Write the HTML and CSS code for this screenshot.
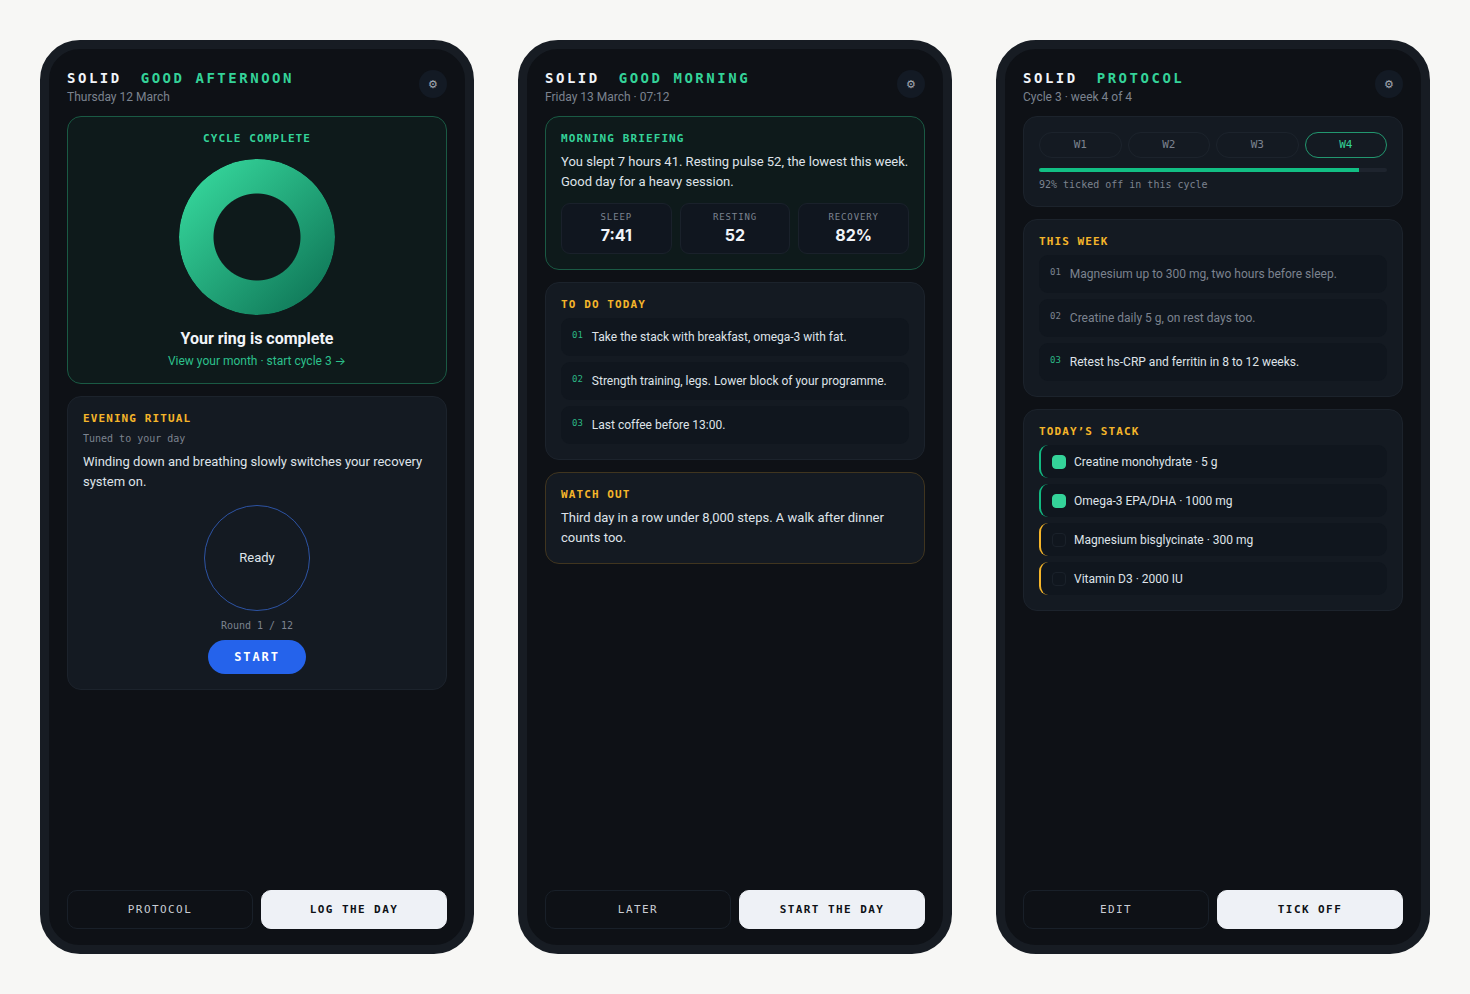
FILE: index.html
```html
<!DOCTYPE html>
<html lang="en">
<head>
<meta charset="utf-8">
<meta name="viewport" content="width=device-width, initial-scale=1">
<title>Solid</title>
<link rel="stylesheet" href="styles.css">
</head>
<body>
<main class="board">

  <section class="phone" aria-label="Good afternoon">
    <header class="top">
      <div class="top-text">
        <h1 class="brand">SOLID <span class="brand-page">GOOD AFTERNOON</span></h1>
        <p class="date">Thursday 12 March</p>
      </div>
      <button class="gear" type="button" aria-label="Settings">⚙</button>
    </header>
    <div class="cards">
      <article class="card card-green centered">
        <h2 class="label label-green">CYCLE COMPLETE</h2>
        <div class="ring"></div>
        <h3 class="ring-title">Your ring is complete</h3>
        <a class="ring-link" href="#month">View your month · start cycle 3 →</a>
      </article>
      <article class="card">
        <h2 class="label">EVENING RITUAL</h2>
        <p class="note">Tuned to your day</p>
        <p class="body">Winding down and breathing slowly switches your recovery system on.</p>
        <div class="breath">
          <div class="orb">Ready</div>
          <p class="note">Round 1 / 12</p>
          <button class="start" type="button">START</button>
        </div>
      </article>
    </div>
    <footer class="actions">
      <button class="btn" type="button">PROTOCOL</button>
      <button class="btn btn-main" type="button">LOG THE DAY</button>
    </footer>
  </section>

  <section class="phone" aria-label="Good morning">
    <header class="top">
      <div class="top-text">
        <h1 class="brand">SOLID <span class="brand-page">GOOD MORNING</span></h1>
        <p class="date">Friday 13 March · 07:12</p>
      </div>
      <button class="gear" type="button" aria-label="Settings">⚙</button>
    </header>
    <div class="cards">
      <article class="card card-green">
        <h2 class="label label-green">MORNING BRIEFING</h2>
        <p class="body">You slept 7 hours 41. Resting pulse 52, the lowest this week. Good day for a heavy session.</p>
        <dl class="stats">
          <div class="stat"><dt>SLEEP</dt><dd>7:41</dd></div>
          <div class="stat"><dt>RESTING</dt><dd>52</dd></div>
          <div class="stat"><dt>RECOVERY</dt><dd>82%</dd></div>
        </dl>
      </article>
      <article class="card">
        <h2 class="label">TO DO TODAY</h2>
        <ol class="steps">
          <li class="step"><span class="num">01</span><span>Take the stack with breakfast, omega-3 with fat.</span></li>
          <li class="step"><span class="num">02</span><span>Strength training, legs. Lower block of your programme.</span></li>
          <li class="step"><span class="num">03</span><span>Last coffee before 13:00.</span></li>
        </ol>
      </article>
      <article class="card card-amber">
        <h2 class="label">WATCH OUT</h2>
        <p class="body">Third day in a row under 8,000 steps. A walk after dinner counts too.</p>
      </article>
    </div>
    <footer class="actions">
      <button class="btn" type="button">LATER</button>
      <button class="btn btn-main" type="button">START THE DAY</button>
    </footer>
  </section>

  <section class="phone" aria-label="Protocol">
    <header class="top">
      <div class="top-text">
        <h1 class="brand">SOLID <span class="brand-page">PROTOCOL</span></h1>
        <p class="date">Cycle 3 · week 4 of 4</p>
      </div>
      <button class="gear" type="button" aria-label="Settings">⚙</button>
    </header>
    <div class="cards">
      <article class="card">
        <div class="weeks">
          <button class="week" type="button">W1</button>
          <button class="week" type="button">W2</button>
          <button class="week" type="button">W3</button>
          <button class="week week-on" type="button" aria-pressed="true">W4</button>
        </div>
        <div class="bar"><div class="bar-fill" style="width: 92%"></div></div>
        <p class="note">92% ticked off in this cycle</p>
      </article>
      <article class="card">
        <h2 class="label">THIS WEEK</h2>
        <ol class="steps">
          <li class="step step-past"><span class="num">01</span><span>Magnesium up to 300 mg, two hours before sleep.</span></li>
          <li class="step step-past"><span class="num">02</span><span>Creatine daily 5 g, on rest days too.</span></li>
          <li class="step"><span class="num">03</span><span>Retest hs-CRP and ferritin in 8 to 12 weeks.</span></li>
        </ol>
      </article>
      <article class="card">
        <h2 class="label">TODAY’S STACK</h2>
        <div class="stack">
          <label class="dose dose-done"><input class="tick" type="checkbox" checked>Creatine monohydrate · 5 g</label>
          <label class="dose dose-done"><input class="tick" type="checkbox" checked>Omega-3 EPA/DHA · 1000 mg</label>
          <label class="dose"><input class="tick" type="checkbox">Magnesium bisglycinate · 300 mg</label>
          <label class="dose"><input class="tick" type="checkbox">Vitamin D3 · 2000 IU</label>
        </div>
      </article>
    </div>
    <footer class="actions">
      <button class="btn" type="button">EDIT</button>
      <button class="btn btn-main" type="button">TICK OFF</button>
    </footer>
  </section>

</main>
</body>
</html>
```
FILE: styles.css
```css
:root {
  --page: #f7f7f5;
  --frame: #171c23;
  --screen: #0e1116;
  --card: #141a22;
  --well: #10161e;
  --line: #1c232c;
  --text: #dfe3e9;
  --bright: #f1f4f9;
  --muted: #7c838f;
  --green: #34d399;
  --amber: #f5b52a;
  --sans: Roboto, Inter, sans-serif;
  --mono: "DejaVu Sans Mono", "Liberation Mono", monospace;
}

* { box-sizing: border-box; }

body {
  margin: 0;
  background: var(--page);
  color: var(--text);
  font-family: var(--sans);
  font-size: 13px;
  line-height: 20px;
}

h1, h2, h3, p, dl, dd, ol { margin: 0; padding: 0; }
button { font-family: inherit; cursor: pointer; }

.board {
  display: grid;
  grid-template-columns: repeat(3, 1fr);
  gap: 44px;
  min-height: 100vh;
  padding: 40px;
}

.phone {
  display: flex;
  flex-direction: column;
  padding: 18px 18px 16px;
  border: 9px solid var(--frame);
  border-radius: 40px;
  background: var(--screen);
}

.top {
  display: flex;
  justify-content: space-between;
  align-items: flex-start;
  margin-bottom: 10px;
}

.brand {
  color: var(--bright);
  font: 700 14px/22px var(--mono);
  letter-spacing: 0.18em;
}
.brand-page { margin-left: 8px; color: var(--green); }

.date { color: var(--muted); font-size: 12px; line-height: 17px; }

.gear {
  width: 28px;
  height: 28px;
  margin-top: 3px;
  padding: 0;
  border: 0;
  border-radius: 50%;
  background: #131a24;
  color: #a3a9b3;
  font-size: 11px;
  line-height: 29px;
}

.cards { display: flex; flex-direction: column; gap: 12px; }

.card {
  padding: 15px;
  border: 1px solid var(--line);
  border-radius: 14px;
  background: var(--card);
}
.card-green { border-color: #1a5a44; background: #0e1a1b; }
.card-amber { border-color: #40351f; }

.centered {
  display: flex;
  flex-direction: column;
  align-items: center;
}

.label {
  margin-bottom: 7px;
  color: var(--amber);
  font: 700 11px/13px var(--mono);
  letter-spacing: 0.1em;
}
.label-green { color: var(--green); }

.note { color: var(--muted); font: 10px/13px var(--mono); }
.note + .body { margin-top: 7px; }

.ring {
  width: 156px;
  height: 156px;
  margin: 7px 0 14px;
  border-radius: 50%;
  background: linear-gradient(135deg, #34d399 12%, #0f7657 92%);
  -webkit-mask: radial-gradient(circle, transparent 43px, #000 44px);
  mask: radial-gradient(circle, transparent 43px, #000 44px);
}
.ring-title { color: var(--bright); font-size: 16px; line-height: 20px; }
.ring-link {
  margin-top: 5px;
  color: #2cc08c;
  font-size: 12px;
  line-height: 14px;
  text-decoration: none;
}

.breath {
  display: flex;
  flex-direction: column;
  align-items: center;
  margin-top: 13px;
}
.orb {
  display: grid;
  place-items: center;
  width: 106px;
  height: 106px;
  margin-bottom: 8px;
  border: 1px solid #2d53a3;
  border-radius: 50%;
}
.start {
  height: 34px;
  margin-top: 8px;
  padding: 0 26px;
  border: 0;
  border-radius: 17px;
  background: #2563eb;
  color: #fff;
  font: 700 12px/34px var(--mono);
  letter-spacing: 0.16em;
}

.stats {
  display: grid;
  grid-template-columns: repeat(3, 1fr);
  gap: 8px;
  margin-top: 11px;
}
.stat {
  padding: 7px 4px;
  border: 1px solid #1a212b;
  border-radius: 9px;
  background: #10161f;
  text-align: center;
}
.stat dt { color: var(--muted); font: 9px/13px var(--mono); letter-spacing: 0.1em; }
.stat dd { color: var(--bright); font: 700 16px/22px Inter, sans-serif; }

.steps, .stack {
  display: flex;
  flex-direction: column;
  gap: 6px;
  font-size: 12px;
  list-style: none;
}
.step {
  display: flex;
  gap: 9px;
  padding: 9px 11px;
  border-radius: 9px;
  background: var(--well);
}
.num { color: #2bb583; font: 9px/17px var(--mono); }
.step-past, .step-past .num { color: var(--muted); }

.weeks { display: grid; grid-template-columns: repeat(4, 1fr); gap: 6px; }
.week {
  height: 26px;
  padding: 0;
  border: 1px solid var(--line);
  border-radius: 13px;
  background: transparent;
  color: var(--muted);
  font: 11px/24px var(--mono);
}
.week-on { border-color: #22976f; color: var(--green); }

.bar {
  height: 4px;
  margin: 10px 0 6px;
  overflow: hidden;
  border-radius: 2px;
  background: #1e242e;
}
.bar-fill { height: 100%; background: #12bf84; }

.dose {
  display: flex;
  align-items: center;
  gap: 8px;
  height: 33px;
  padding: 0 11px;
  border-left: 2px solid var(--amber);
  border-radius: 9px;
  background: var(--well);
}
.dose-done { border-left-color: #12b981; }
.tick {
  appearance: none;
  width: 14px;
  height: 14px;
  margin: 0;
  border: 1px solid #1a212a;
  border-radius: 4px;
}
.tick:checked { border-color: var(--green); background: var(--green); }

.actions {
  display: grid;
  grid-template-columns: 1fr 1fr;
  gap: 8px;
  margin-top: auto;
}
.btn {
  height: 39px;
  padding: 0;
  border: 1px solid #192029;
  border-radius: 10px;
  background: transparent;
  color: #c9cdd4;
  font: 11px/37px var(--mono);
  letter-spacing: 0.13em;
}
.btn-main {
  border-color: #eef1f6;
  background: #eef1f6;
  color: #0e1116;
  font-weight: 700;
}
```
